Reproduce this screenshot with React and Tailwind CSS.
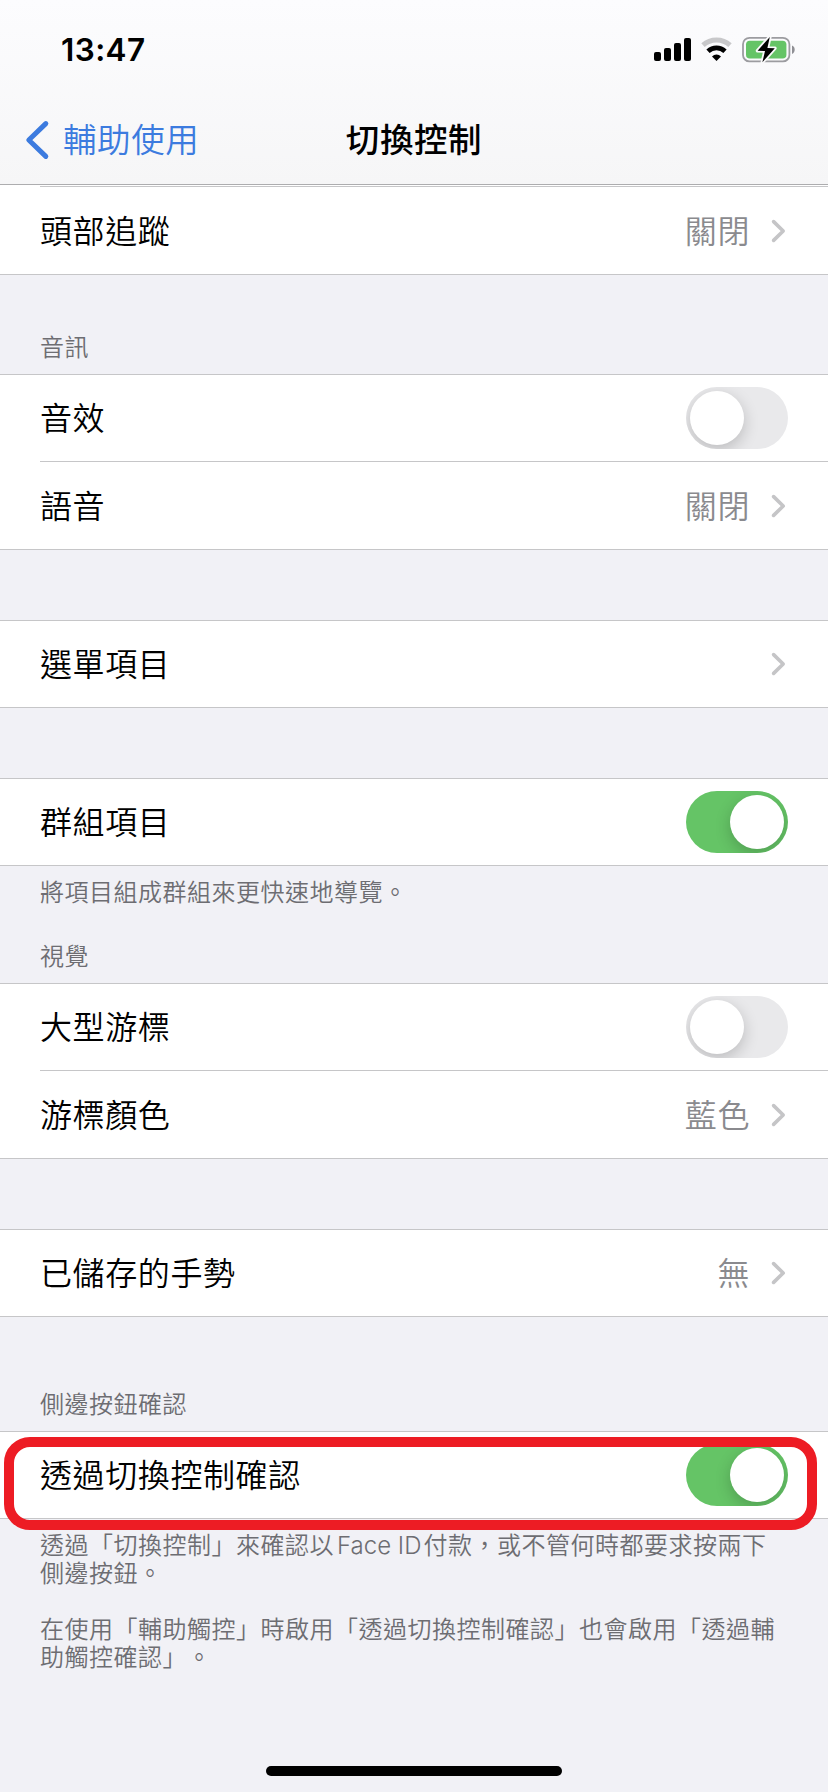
const INK = "pt-[2px] text-[32px] font-[350] tracking-[0.6px]";

function Chevron() {
  return (
    <svg className="ml-[25px] mr-[2px] shrink-0" width="15" height="24" viewBox="0 0 15 24" fill="none">
      <path d="M2.6 2.6 12.2 12 2.6 21.4" stroke="#c5c5c7" strokeWidth="3.6" strokeLinecap="round" strokeLinejoin="round" />
    </svg>
  );
}

function Toggle({ on = false }) {
  return (
    <span
      className={
        "flex h-[62px] w-[102px] shrink-0 items-center overflow-hidden rounded-full p-1 " +
        (on ? "justify-end bg-[#65c466]" : "justify-start bg-[#e9e9eb]")
      }
    >
      <span className="size-[54px] rounded-full bg-white shadow-[0_5px_16px_rgba(0,0,0,0.2)]" />
    </span>
  );
}

function Row({ label, value, toggle, last = false, tall = false }) {
  return (
    <div className="pl-10">
      <div
        className={
          "flex items-center pr-10 " +
          (tall ? "h-[87px] " : "h-[86px] ") +
          (last ? "" : "box-content border-b border-[#c6c6c8]")
        }
      >
        <span className={"grow text-black " + INK}>{label}</span>
        {value && <span className={"-mr-1 text-[#8a8a8e] " + INK}>{value}</span>}
        {toggle === undefined ? <Chevron /> : <Toggle on={toggle} />}
      </div>
    </div>
  );
}

function Group({ children }) {
  return <section className="border-y border-[#c6c6c8] bg-white">{children}</section>;
}

function Caption({ className, children }) {
  return (
    <p className={"px-10 text-[24px] font-[350] leading-[28px] tracking-[0.5px] text-[#6d6d72] " + className}>
      {children}
    </p>
  );
}

function StatusBar() {
  return (
    <div className="flex h-[98px] items-center justify-between pl-[61px] pr-[33px]">
      <span className="pt-[2px] font-[Inter] text-[31.5px] font-semibold tracking-[0.4px]">13:47</span>
      <svg width="142" height="28" viewBox="652 35 142 28">
        <g fill="#000">
          <rect x="653" y="52" width="7" height="9" rx="2" />
          <rect x="663" y="48" width="7" height="13" rx="2" />
          <rect x="673" y="43" width="7" height="18" rx="2" />
          <rect x="683" y="38" width="7" height="23" rx="2" />
        </g>
        <path d="M702 45.2A20 20 0 0 1 729 45.2" fill="none" stroke="#c8c8ca" strokeWidth="5" />
        <path d="M707 51.2A12.6 12.6 0 0 1 724 51.2" fill="none" stroke="#000" strokeWidth="4.8" />
        <path d="M715.5 61 711 56.4A6.5 6.5 0 0 1 720 56.4Z" fill="#000" />
        <rect x="742" y="37.8" width="46.4" height="23.6" rx="6.5" fill="none" stroke="#9c9ca0" strokeWidth="1.8" />
        <rect x="745" y="40.8" width="40.4" height="17.8" rx="3.8" fill="#65c466" />
        <path d="M791 45.5C794.6 46.6 794.6 52.8 791 53.9Z" fill="#8f8f94" />
        <path
          d="M768.8 37 756.6 50.8 764 51 761.4 62.2 773.8 48.2 766.4 48Z"
          fill="#000"
          stroke="#fafafb"
          strokeWidth="3.6"
          strokeLinejoin="round"
          paintOrder="stroke"
        />
      </svg>
    </div>
  );
}

export default function App() {
  return (
    <div
      lang="zh-Hant"
      className="flex h-[1792px] w-[828px] flex-col overflow-hidden bg-[#f1f1f6] font-[Inter,'Noto_Sans_CJK_TC',sans-serif] text-black"
    >
      <header className="h-[185px] shrink-0 border-b border-[#adadaf] bg-linear-to-b from-[#fcfcfe] to-[#f6f6f7]">
        <StatusBar />
        <div className="grid h-[84px] grid-cols-[1fr_auto_1fr] items-center text-[33.5px] tracking-[0.6px]">
          <div className="flex items-center font-[350] text-[#3c7bdf]">
            <svg className="ml-[24px] mr-[13px]" width="26" height="40" viewBox="0 0 26 40" fill="none">
              <path d="M21.8 3.6 4.8 20 21.8 36.4" stroke="currentColor" strokeWidth="5" strokeLinecap="round" strokeLinejoin="round" />
            </svg>
            輔助使用
          </div>
          <h1 className="font-medium">切換控制</h1>
          <span />
        </div>
      </header>

      <main className="flex flex-col">
        <section className="border-b border-[#c6c6c8] bg-white pt-px">
          <div className="ml-10 h-px bg-[#c6c6c8]" />
          <Row label="頭部追蹤" value="關閉" last tall />
        </section>

        <Caption className="pb-3 pt-[59px]">音訊</Caption>
        <Group>
          <Row label="音效" toggle={false} />
          <Row label="語音" value="關閉" last tall />
        </Group>

        <div className="h-[70px]" />
        <Group>
          <Row label="選單項目" last />
        </Group>

        <div className="h-[70px]" />
        <Group>
          <Row label="群組項目" toggle={true} last />
        </Group>
        <Caption className="pt-[13px]">將項目組成群組來更快速地導覽。</Caption>

        <Caption className="pb-3 pt-[36px]">視覺</Caption>
        <Group>
          <Row label="大型游標" toggle={false} />
          <Row label="游標顏色" value="藍色" last tall />
        </Group>

        <div className="h-[70px]" />
        <Group>
          <Row label="已儲存的手勢" value="無" last />
        </Group>

        <Caption className="pb-3 pt-[74px]">側邊按鈕確認</Caption>
        <div className="relative">
          <Group>
            <Row label="透過切換控制確認" toggle={true} last />
          </Group>
          <div className="absolute left-1 top-[6px] h-[93px] w-[813px] rounded-[26px] border-[10px] border-[#ed1c24]" />
        </div>
        <Caption className="pt-[13px] [text-spacing-trim:space-all]">
          透過「切換控制」來確認以<span className="ml-[3px] mr-[2px] tracking-[0px]">Face ID</span>付款，或不管何時都要求按兩下
          <br />
          側邊按鈕。
        </Caption>
        <Caption className="pt-[28px] [text-spacing-trim:space-all]">
          在使用「輔助觸控」時啟用「透過切換控制確認」也會啟用「透過輔
          <br />
          助觸控確認」。
        </Caption>
      </main>

      <div className="mx-auto mb-4 mt-auto h-[10px] w-[296px] shrink-0 rounded-full bg-black" />
    </div>
  );
}
